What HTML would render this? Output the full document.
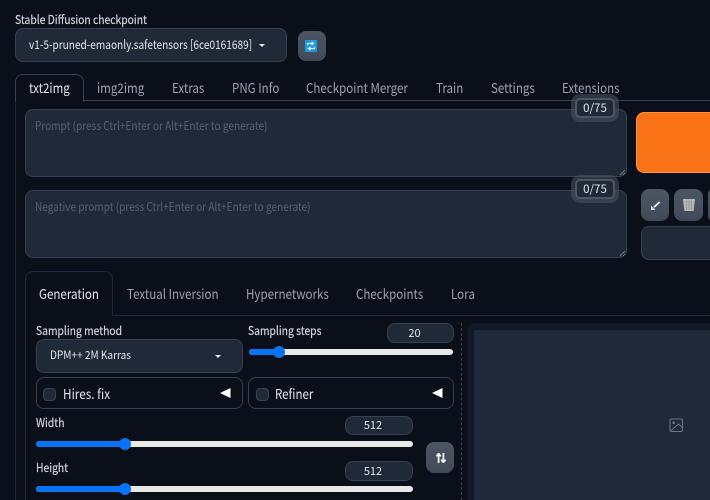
<!DOCTYPE html>
<html lang="en"><head><meta charset="utf-8"><title>Stable Diffusion</title>
<style>
html,body{margin:0;padding:0;width:710px;height:500px;overflow:hidden;background:#0b0f19}
body{position:relative;font-family:"Noto Sans CJK JP","Liberation Sans",sans-serif;color:#e5e7eb}
.a{position:absolute;box-sizing:border-box}
.t{position:absolute;white-space:nowrap;line-height:16px;height:16px;transform:scaleX(.86);transform-origin:0 50%}
.box{background:#1f2937;border:1px solid #374151;border-radius:8px}
.btn{border-radius:8px;background:linear-gradient(to bottom,#4b5563,#404a58)}
.lab{font-size:12px;color:#d1d5db;-webkit-text-stroke:.2px #d1d5db}
.tab{font-size:13.3px;color:#9ca3af;transform:scaleX(.87)}
.ph{font-size:11.8px;color:#56606f;transform:scaleX(.852)}
.cnt{width:40px;height:20px;background:#1f2937;border:2px solid #4b5563;border-radius:5px;box-shadow:0 0 0 4px rgba(75,85,99,.55);font-size:11.5px;line-height:16px;text-align:center;color:#e5e7eb}
.track{height:6px;background:#e8e8e8;border-radius:3px}
.fill{height:6px;background:#0a72f5;border-radius:3px}
.thumb{width:12px;height:12px;border-radius:50%;background:#0a72f5}
.num{background:#1f2937;border:1px solid #374151;border-radius:8px;font-size:11px;line-height:18px;text-align:center;color:#e5e7eb;padding-right:12px}
.chk{width:13px;height:13px;background:#1f2937;border:1px solid #374151;border-radius:4px}
.grp{border:1px solid #374151;border-radius:8px}
.caret{width:0;height:0;border:3px solid transparent;border-top:3px solid #e5e7eb;border-bottom:0}
</style></head><body>

<div class="t lab" style="left:15px;top:12px">Stable Diffusion checkpoint</div>
<div class="a box" style="left:15px;top:28px;width:272px;height:34px"></div>
<div class="t" style="left:29px;top:37px;font-size:12.1px;color:#e5e7eb;transform:scaleX(.835)">v1-5-pruned-emaonly.safetensors [6ce0161689]</div>
<div class="a caret" style="left:259px;top:44px"></div>
<div class="a btn" style="left:298px;top:31px;width:28px;height:30px"></div>
<svg class="a" style="left:305px;top:40px" width="12" height="12" viewBox="0 0 12 12"><rect width="12" height="12" rx="1" fill="#1d9be6"/><path d="M2.5 5V3.5H8M6.5 2L8.5 3.5L6.5 5M9.5 7V8.5H4M5.5 7L3.5 8.5L5.5 10" fill="none" stroke="#fff" stroke-width="1.1"/></svg>

<!-- top tabs -->
<div class="a" style="left:15px;top:100px;width:695px;height:1px;background:#374151"></div>
<div class="a" style="left:15px;top:100px;width:1px;height:400px;background:#1f2937"></div>
<div class="a" style="left:15px;top:74px;width:69px;height:28px;background:#0b0f19;border:1px solid #374151;border-bottom:0;border-radius:8px 8px 0 0"></div>
<div class="t tab" style="left:29px;top:80px;color:#e5e7eb">txt2img</div>
<div class="t tab" style="left:97px;top:80px">img2img</div>
<div class="t tab" style="left:172px;top:80px">Extras</div>
<div class="t tab" style="left:232px;top:80px">PNG Info</div>
<div class="t tab" style="left:306px;top:80px">Checkpoint Merger</div>
<div class="t tab" style="left:436px;top:80px">Train</div>
<div class="t tab" style="left:491px;top:80px">Settings</div>
<div class="t tab" style="left:562px;top:80px">Extensions</div>

<!-- prompts -->
<div class="a box" style="left:25px;top:109px;width:602px;height:68px"></div>
<div class="t ph" style="left:35px;top:118px">Prompt (press Ctrl+Enter or Alt+Enter to generate)</div>
<svg class="a" style="left:619px;top:169px" width="7" height="7" viewBox="0 0 7 7"><path d="M1 6L6 1M4 6L6 4" stroke="#6b7280" stroke-width="1"/></svg>
<div class="a cnt" style="left:575px;top:98px">0/75</div>

<div class="a box" style="left:25px;top:190px;width:602px;height:68px"></div>
<div class="t ph" style="left:35px;top:199px">Negative prompt (press Ctrl+Enter or Alt+Enter to generate)</div>
<svg class="a" style="left:619px;top:250px" width="7" height="7" viewBox="0 0 7 7"><path d="M1 6L6 1M4 6L6 4" stroke="#6b7280" stroke-width="1"/></svg>
<div class="a cnt" style="left:575px;top:179px">0/75</div>

<!-- right column -->
<div class="a" style="left:636px;top:112px;width:80px;height:61px;background:#f97316;border-left:1px solid #fb923c;border-top:1px solid #fb923c;border-bottom:1px solid #fb923c;border-radius:8px 0 0 8px"></div>
<div class="a btn" style="left:641px;top:189px;width:28px;height:32px"></div>
<svg class="a" style="left:650px;top:201px" width="10" height="10" viewBox="0 0 10 10"><path d="M9.5 1L4 6.2" stroke="#f0f0f0" stroke-width="1.8"/><path d="M1 4.5V9H5.5Z" fill="#cfe0f8"/></svg>
<div class="a btn" style="left:674px;top:189px;width:29px;height:32px"></div>
<svg class="a" style="left:683px;top:199px" width="12" height="12" viewBox="0 0 12 12"><path d="M0 0H12L10.6 12H1.4Z" fill="#bdbdbd"/><path d="M.8 3H11.2M1.2 6H10.8M1.5 9H10.5M3.5 .5V11.5M6 .5V11.5M8.5 .5V11.5" stroke="#8c8c8c" stroke-width=".6"/></svg>
<div class="a btn" style="left:708px;top:189px;width:10px;height:32px"></div>
<div class="a box" style="left:641px;top:226px;width:80px;height:34px"></div>

<!-- sub tabs -->
<div class="a" style="left:25px;top:315px;width:685px;height:1px;background:#1f2937"></div>
<div class="a" style="left:25px;top:315px;width:1px;height:185px;background:#1f2937"></div>
<div class="a" style="left:25px;top:271px;width:88px;height:45px;background:#0b0f19;border:1px solid #1f2937;border-bottom:0;border-radius:8px 8px 0 0"></div>
<div class="t tab" style="left:39px;top:286px;color:#e5e7eb">Generation</div>
<div class="t tab" style="left:127px;top:286px">Textual Inversion</div>
<div class="t tab" style="left:246px;top:286px">Hypernetworks</div>
<div class="t tab" style="left:356px;top:286px">Checkpoints</div>
<div class="t tab" style="left:451px;top:286px">Lora</div>

<!-- left settings -->
<div class="t lab" style="left:36px;top:323px">Sampling method</div>
<div class="a box" style="left:36px;top:339px;width:207px;height:34px"></div>
<div class="t" style="left:50px;top:347px;font-size:11.2px;color:#e5e7eb;transform:scaleX(.9)">DPM++ 2M Karras</div>
<div class="a caret" style="left:215px;top:355px"></div>

<div class="t lab" style="left:248px;top:323px">Sampling steps</div>
<div class="a num" style="left:387px;top:323px;width:67px;height:20px">20</div>
<div class="a track" style="left:249px;top:349px;width:204px"></div>
<div class="a fill" style="left:249px;top:349px;width:30px"></div>
<div class="a thumb" style="left:273px;top:346px"></div>

<div class="a grp" style="left:36px;top:377px;width:207px;height:32px"></div>
<div class="a chk" style="left:43px;top:388px"></div>
<div class="t" style="left:63px;top:386px;font-size:13.3px;color:#e5e7eb;transform:scaleX(.885)">Hires. fix</div>
<svg class="a" style="left:220px;top:388px" width="11" height="10" viewBox="0 0 11 10"><path d="M0 5L10.5 0V10Z" fill="#fff"/></svg>

<div class="a grp" style="left:248px;top:377px;width:206px;height:32px"></div>
<div class="a chk" style="left:256px;top:388px"></div>
<div class="t" style="left:275px;top:386px;font-size:13.3px;color:#e5e7eb;transform:scaleX(.865)">Refiner</div>
<svg class="a" style="left:432px;top:388px" width="11" height="10" viewBox="0 0 11 10"><path d="M0 5L10.5 0V10Z" fill="#fff"/></svg>

<div class="t lab" style="left:36px;top:415px">Width</div>
<div class="a num" style="left:345px;top:416px;width:68px;height:19px;line-height:17px">512</div>
<div class="a track" style="left:36px;top:441px;width:377px"></div>
<div class="a fill" style="left:36px;top:441px;width:89px"></div>
<div class="a thumb" style="left:119px;top:438px"></div>

<div class="t lab" style="left:36px;top:460px">Height</div>
<div class="a num" style="left:345px;top:461px;width:68px;height:20px">512</div>
<div class="a track" style="left:36px;top:486px;width:377px"></div>
<div class="a fill" style="left:36px;top:486px;width:89px"></div>
<div class="a thumb" style="left:119px;top:483px"></div>

<div class="a btn" style="left:426px;top:442px;width:28px;height:31px"></div>
<svg class="a" style="left:436px;top:453px" width="10" height="10" viewBox="0 0 10 10"><path d="M2.6 10V2M.4 3.4L2.6 .6L4.8 3.4" fill="none" stroke="#fff" stroke-width="1.7"/><path d="M7.4 0V8M5.2 6.6L7.4 9.4L9.6 6.6" fill="none" stroke="#fff" stroke-width="1.7"/></svg>

<!-- divider and gallery -->
<div class="a" style="left:461px;top:323px;width:0;height:177px;border-left:1px dashed #374151"></div>
<div class="a" style="left:467px;top:323px;width:260px;height:190px;background:#111827;border-radius:8px"></div>
<div class="a" style="left:474px;top:330px;width:240px;height:175px;background:#1f2937"></div>
<svg class="a" style="left:669px;top:418px" width="15" height="15" viewBox="0 0 15 15"><rect x="1" y="1" width="12.5" height="12.5" rx="1.5" fill="none" stroke="#6b7280" stroke-width="1.1"/><circle cx="4.7" cy="4.7" r="1.3" fill="#6b7280"/><path d="M2 12.5L9.5 6L13.5 10" fill="none" stroke="#6b7280" stroke-width="1.1"/></svg>
</body></html>
